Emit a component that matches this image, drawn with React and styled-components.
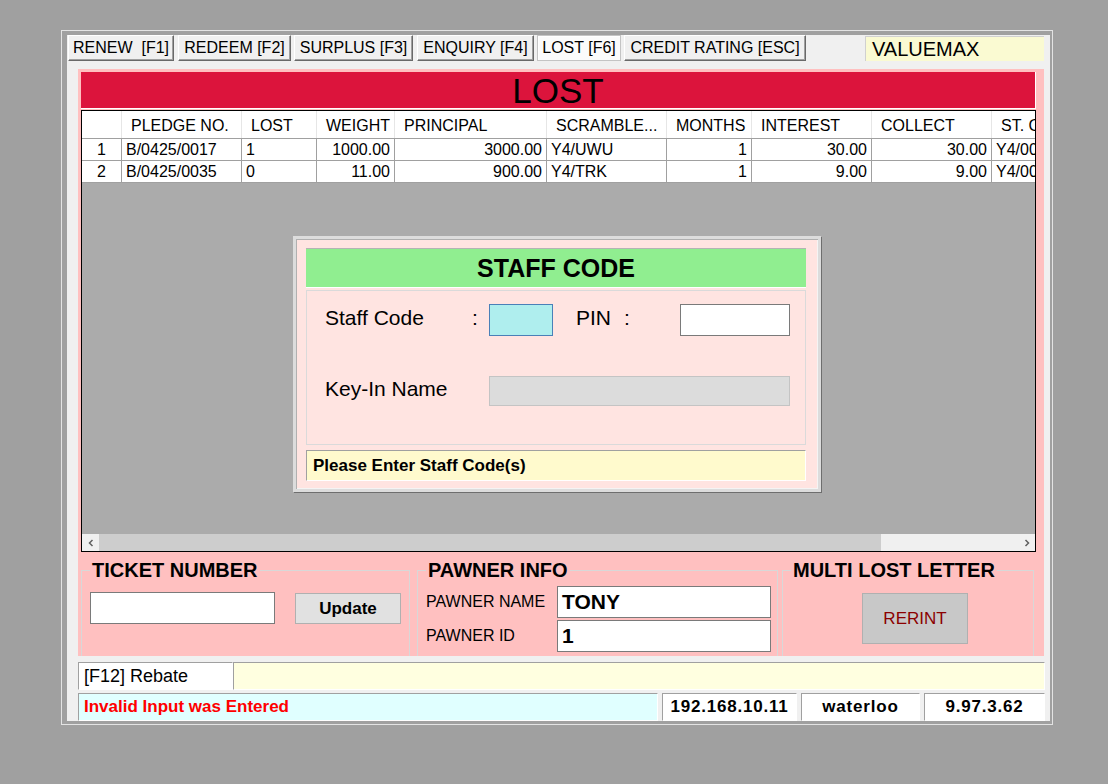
import React from 'react';
import styled, { createGlobalStyle, css } from 'styled-components';

const GlobalStyle = createGlobalStyle`
  html, body {
    margin: 0;
    padding: 0;
    background: #a0a0a0;
  }
  body {
    font-family: "Liberation Sans", Arial, sans-serif;
    color: #000;
  }
  * {
    box-sizing: border-box;
  }
`;

const Screen = styled.div`
  width: 1108px;
  height: 784px;
  padding: 30px 0 0 61px;
`;

const Frame = styled.div`
  width: 992px;
  height: 695px;
  border: 1px solid #e3e3e3;
  padding: 4px 2px 3px 5px;
`;

const Panel = styled.div`
  height: 100%;
  background: #f0f0f0;
  display: flex;
  flex-direction: column;
`;

const TabRow = styled.div`
  flex: none;
  display: flex;
  align-items: flex-start;
  height: 26px;
  margin-left: 1px;
`;

const Tab = styled.div`
  flex: none;
  width: ${(p) => p.$w}px;
  margin-right: ${(p) => p.$gap}px;
  height: 26px;
  font-size: 16px;
  line-height: 23px;
  text-align: center;
  white-space: nowrap;
  background: #f0f0f0;
  border: 1px solid;
  border-color: #ffffff #696969 #696969 #ffffff;
  box-shadow: inset -1px -1px 0 #a0a0a0;

  ${(p) =>
    p.$active &&
    css`
      background: #fbfbfb;
      border-color: #c4c4c4;
      box-shadow: inset 1px 1px 0 #ffffff;
    `}
`;

const BrandBox = styled.div`
  margin-left: auto;
  margin-right: 6px;
  margin-top: 1px;
  width: 179px;
  height: 25px;
  padding-left: 6px;
  font-size: 20px;
  line-height: 25px;
  background: #fafad2;
  border-top: 1px solid #d0d0d0;
  border-left: 1px solid #d0d0d0;
`;

const PinkPanel = styled.div`
  flex: none;
  margin: 8px 6px 0 11px;
  height: 587px;
  padding: 3px 8px 0 3px;
  background: #ffc0c0;
  overflow: hidden;
  display: flex;
  flex-direction: column;
`;

const TitleBar = styled.div`
  flex: none;
  height: 37px;
  margin-bottom: 1px;
  background: #dc143c;
  border-right: 1px solid #ffffff;
  border-bottom: 1px solid #ffffff;
  font-size: 35px;
  line-height: 38px;
  text-align: center;
`;

const GridBox = styled.div`
  flex: none;
  position: relative;
  height: 442px;
  border: 1px solid #000;
  background: #ababab;
  display: flex;
  flex-direction: column;
`;

const TableArea = styled.div`
  flex: 1;
  overflow: hidden;
`;

const Row = styled.div`
  display: flex;
  width: max-content;
  height: ${(p) => (p.$head ? 28 : 22)}px;
  background: #ffffff;
  border-bottom: 1px solid #a0a0a0;
`;

const Cell = styled.div`
  flex: none;
  width: ${(p) => p.$w}px;
  font-size: 16px;
  line-height: ${(p) => (p.$head ? 29 : 21)}px;
  white-space: nowrap;
  overflow: hidden;
  text-align: ${(p) => p.$align || 'left'};
  padding: ${(p) => (p.$head ? '0 0 0 9px' : '0 4px 0 4px')};
  border-right: 1px solid ${(p) => (p.$head ? '#e6e6e6' : '#a0a0a0')};
`;

const ScrollBar = styled.div`
  flex: none;
  height: 17px;
  display: flex;
  background: #f0f0f0;
`;

const ScrollArrow = styled.div`
  width: 17px;
  height: 17px;
  display: flex;
  align-items: center;
  justify-content: center;
`;

const ScrollThumb = styled.div`
  width: 782px;
  height: 17px;
  background: #cdcdcd;
`;

const ScrollTrack = styled.div`
  flex: 1;
`;

const Dialog = styled.div`
  position: absolute;
  left: 211px;
  top: 125px;
  width: 528px;
  height: 256px;
  padding: 9px 12px 8px 10px;
  background: #ffe4e1;
  border: 3px solid #dcdcdc;
  box-shadow: 1px 1px 0 #6e6e6e, inset 1px 1px 0 #b0b0b0, inset -1px -1px 0 #f4f4f4;
  display: flex;
  flex-direction: column;
`;

const DialogHead = styled.div`
  flex: none;
  height: 40px;
  background: #90ee90;
  border-top: 1px solid #b4b4b4;
  border-bottom: 1px solid #ffffff;
  font-size: 25px;
  font-weight: bold;
  line-height: 38px;
  text-align: center;
`;

const DialogBody = styled.div`
  flex: none;
  margin-top: 2px;
  height: 155px;
  border: 1px solid #dadada;
  padding: 13px 16px 0 18px;
`;

const FormRow = styled.div`
  display: flex;
  align-items: center;
  margin-top: ${(p) => p.$gap || 0}px;
`;

const FormLabel = styled.div`
  flex: none;
  width: ${(p) => p.$w}px;
  margin-left: ${(p) => p.$ml || 0}px;
  margin-top: -4px;
  font-size: 21px;
  white-space: nowrap;
`;

const Field = styled.div`
  flex: none;
  width: ${(p) => p.$w}px;
  height: ${(p) => p.$h}px;
  background: ${(p) => p.$bg || '#ffffff'};
  border: 1px solid ${(p) => p.$line || '#7a7a7a'};
`;

const DialogMessage = styled.div`
  flex: none;
  margin-top: 5px;
  height: 31px;
  padding-left: 6px;
  background: #fffacd;
  border-top: 1px solid #a0a0a0;
  border-left: 1px solid #a0a0a0;
  border-bottom: 1px solid #ffffff;
  border-right: 1px solid #ffffff;
  font-size: 17px;
  font-weight: bold;
  line-height: 29px;
`;

const GroupRow = styled.div`
  flex: none;
  display: flex;
  margin-top: 7px;
`;

const Group = styled.fieldset`
  flex: none;
  width: ${(p) => p.$w}px;
  height: 110px;
  margin: 0 0 0 ${(p) => p.$ml || 0}px;
  padding: 0 0 0 8px;
  min-width: 0;
  border: 1px solid #d8d8d8;
`;

const GroupTitle = styled.legend`
  padding: 0 2px;
  font-size: 20px;
  font-weight: bold;
  line-height: 23px;
`;

const TicketLine = styled.div`
  display: flex;
  align-items: flex-start;
  margin-top: 10px;
`;

const TextBox = styled.div`
  flex: none;
  width: ${(p) => p.$w}px;
  height: 32px;
  background: #ffffff;
  border: 1px solid #7a7a7a;
  padding-left: 4px;
  font-size: 21px;
  font-weight: bold;
  line-height: 30px;
`;

const GreyButton = styled.div`
  flex: none;
  width: 106px;
  height: ${(p) => p.$h}px;
  margin: ${(p) => p.$m};
  background: ${(p) => p.$bg};
  border: 1px solid #b0b0b0;
  color: ${(p) => p.$color || '#000'};
  font-size: 17px;
  font-weight: ${(p) => (p.$bold ? 'bold' : 'normal')};
  line-height: ${(p) => p.$h - 2}px;
  text-align: center;
`;

const PawnerLine = styled.div`
  display: flex;
  align-items: center;
  margin-top: ${(p) => p.$mt}px;
`;

const PawnerLabel = styled.div`
  flex: none;
  width: 131px;
  font-size: 16px;
  white-space: nowrap;
`;

const StatusLine = styled.div`
  flex: none;
  display: flex;
  gap: ${(p) => p.$gap || 0}px;
  width: 967px;
  height: 28px;
  margin: ${(p) => p.$mt}px 0 0 11px;
`;

const StatusCell = styled.div`
  flex: ${(p) => (p.$w ? 'none' : 1)};
  width: ${(p) => (p.$w ? `${p.$w}px` : 'auto')};
  background: ${(p) => p.$bg};
  color: ${(p) => p.$color || '#000'};
  padding-left: ${(p) => (p.$center ? 0 : 5)}px;
  text-align: ${(p) => (p.$center ? 'center' : 'left')};
  font-size: ${(p) => p.$size || 17}px;
  font-weight: ${(p) => (p.$bold ? 'bold' : 'normal')};
  letter-spacing: ${(p) => (p.$center ? 0.8 : 0)}px;
  line-height: 26px;
  white-space: nowrap;
  border-top: 1px solid #a0a0a0;
  border-left: 1px solid #a0a0a0;
  border-bottom: 1px solid #ffffff;
  border-right: 1px solid #ffffff;
`;

const tabs = [
  { label: 'RENEW\u00a0 [F1]', w: 106, gap: 4 },
  { label: 'REDEEM [F2]', w: 113, gap: 3 },
  { label: 'SURPLUS [F3]', w: 119, gap: 4 },
  { label: 'ENQUIRY [F4]', w: 117, gap: 3 },
  { label: 'LOST [F6]', w: 84, gap: 3, active: true },
  { label: 'CREDIT RATING [ESC]', w: 182, gap: 0 },
];

const columns = [
  { key: 'no', label: '', w: 40, align: 'center' },
  { key: 'pledge', label: 'PLEDGE NO.', w: 120 },
  { key: 'lost', label: 'LOST', w: 75 },
  { key: 'weight', label: 'WEIGHT', w: 78, align: 'right' },
  { key: 'principal', label: 'PRINCIPAL', w: 152, align: 'right' },
  { key: 'scramble', label: 'SCRAMBLE...', w: 120 },
  { key: 'months', label: 'MONTHS', w: 85, align: 'right' },
  { key: 'interest', label: 'INTEREST', w: 120, align: 'right' },
  { key: 'collect', label: 'COLLECT', w: 120, align: 'right' },
  { key: 'st', label: 'ST. CODE', w: 120 },
];

const rows = [
  { no: '1', pledge: 'B/0425/0017', lost: '1', weight: '1000.00', principal: '3000.00', scramble: 'Y4/UWU', months: '1', interest: '30.00', collect: '30.00', st: 'Y4/0017' },
  { no: '2', pledge: 'B/0425/0035', lost: '0', weight: '11.00', principal: '900.00', scramble: 'Y4/TRK', months: '1', interest: '9.00', collect: '9.00', st: 'Y4/0035' },
];

const Chevron = ({ dir }) => (
  <svg width="8" height="8" viewBox="0 0 8 8">
    <path
      d={dir === 'left' ? 'M5.5 1 L2.5 4 L5.5 7' : 'M2.5 1 L5.5 4 L2.5 7'}
      fill="none"
      stroke="#606060"
      strokeWidth="1.5"
    />
  </svg>
);

const App = () => (
  <>
    <GlobalStyle />
    <Screen>
      <Frame>
        <Panel>
          <TabRow>
            {tabs.map((t) => (
              <Tab key={t.label} $w={t.w} $gap={t.gap} $active={t.active}>
                {t.label}
              </Tab>
            ))}
            <BrandBox>VALUEMAX</BrandBox>
          </TabRow>

          <PinkPanel>
            <TitleBar>LOST</TitleBar>

            <GridBox>
              <TableArea>
                <Row $head>
                  {columns.map((c) => (
                    <Cell key={c.key} $w={c.w} $head>
                      {c.label}
                    </Cell>
                  ))}
                </Row>
                {rows.map((r) => (
                  <Row key={r.no}>
                    {columns.map((c) => (
                      <Cell key={c.key} $w={c.w} $align={c.align}>
                        {r[c.key]}
                      </Cell>
                    ))}
                  </Row>
                ))}
              </TableArea>
              <ScrollBar>
                <ScrollArrow>
                  <Chevron dir="left" />
                </ScrollArrow>
                <ScrollThumb />
                <ScrollTrack />
                <ScrollArrow>
                  <Chevron dir="right" />
                </ScrollArrow>
              </ScrollBar>

              <Dialog>
                <DialogHead>STAFF CODE</DialogHead>
                <DialogBody>
                  <FormRow>
                    <FormLabel $w={147}>Staff Code</FormLabel>
                    <FormLabel $w={17}>:</FormLabel>
                    <Field $w={64} $h={32} $bg="#afeeee" $line="#4a80b8" />
                    <FormLabel $w={48} $ml={23}>PIN</FormLabel>
                    <FormLabel $w={56}>:</FormLabel>
                    <Field $w={110} $h={32} />
                  </FormRow>
                  <FormRow $gap={40}>
                    <FormLabel $w={164}>Key-In Name</FormLabel>
                    <Field $w={301} $h={30} $bg="#dcdcdc" $line="#c4c4c4" />
                  </FormRow>
                </DialogBody>
                <DialogMessage>Please Enter Staff Code(s)</DialogMessage>
              </Dialog>
            </GridBox>

            <GroupRow>
              <Group $w={329}>
                <GroupTitle>TICKET NUMBER</GroupTitle>
                <TicketLine>
                  <TextBox $w={185} />
                  <GreyButton $h={31} $m="1px 0 0 20px" $bg="#e1e1e1" $bold>
                    Update
                  </GreyButton>
                </TicketLine>
              </Group>

              <Group $w={361} $ml={7}>
                <GroupTitle>PAWNER INFO</GroupTitle>
                <PawnerLine $mt={4}>
                  <PawnerLabel>PAWNER NAME</PawnerLabel>
                  <TextBox $w={214}>TONY</TextBox>
                </PawnerLine>
                <PawnerLine $mt={2}>
                  <PawnerLabel>PAWNER ID</PawnerLabel>
                  <TextBox $w={214}>1</TextBox>
                </PawnerLine>
              </Group>

              <Group $w={252} $ml={4}>
                <GroupTitle>MULTI LOST LETTER</GroupTitle>
                <GreyButton $h={51} $m="11px 0 0 71px" $bg="#c8c8c8" $color="#8b0000">
                  RERINT
                </GreyButton>
              </Group>
            </GroupRow>
          </PinkPanel>

          <StatusLine $mt={6}>
            <StatusCell $w={155} $bg="#ffffff" $size={18}>
              [F12] Rebate
            </StatusCell>
            <StatusCell $bg="#ffffe0" />
          </StatusLine>

          <StatusLine $mt={3} $gap={4}>
            <StatusCell $w={580} $bg="#e0ffff" $color="#ff0000" $bold>
              Invalid Input was Entered
            </StatusCell>
            <StatusCell $w={135} $bg="#ffffff" $bold $center>
              192.168.10.11
            </StatusCell>
            <StatusCell $w={119} $bg="#ffffff" $bold $center>
              waterloo
            </StatusCell>
            <StatusCell $bg="#ffffff" $bold $center>
              9.97.3.62
            </StatusCell>
          </StatusLine>
        </Panel>
      </Frame>
    </Screen>
  </>
);

export default App;
